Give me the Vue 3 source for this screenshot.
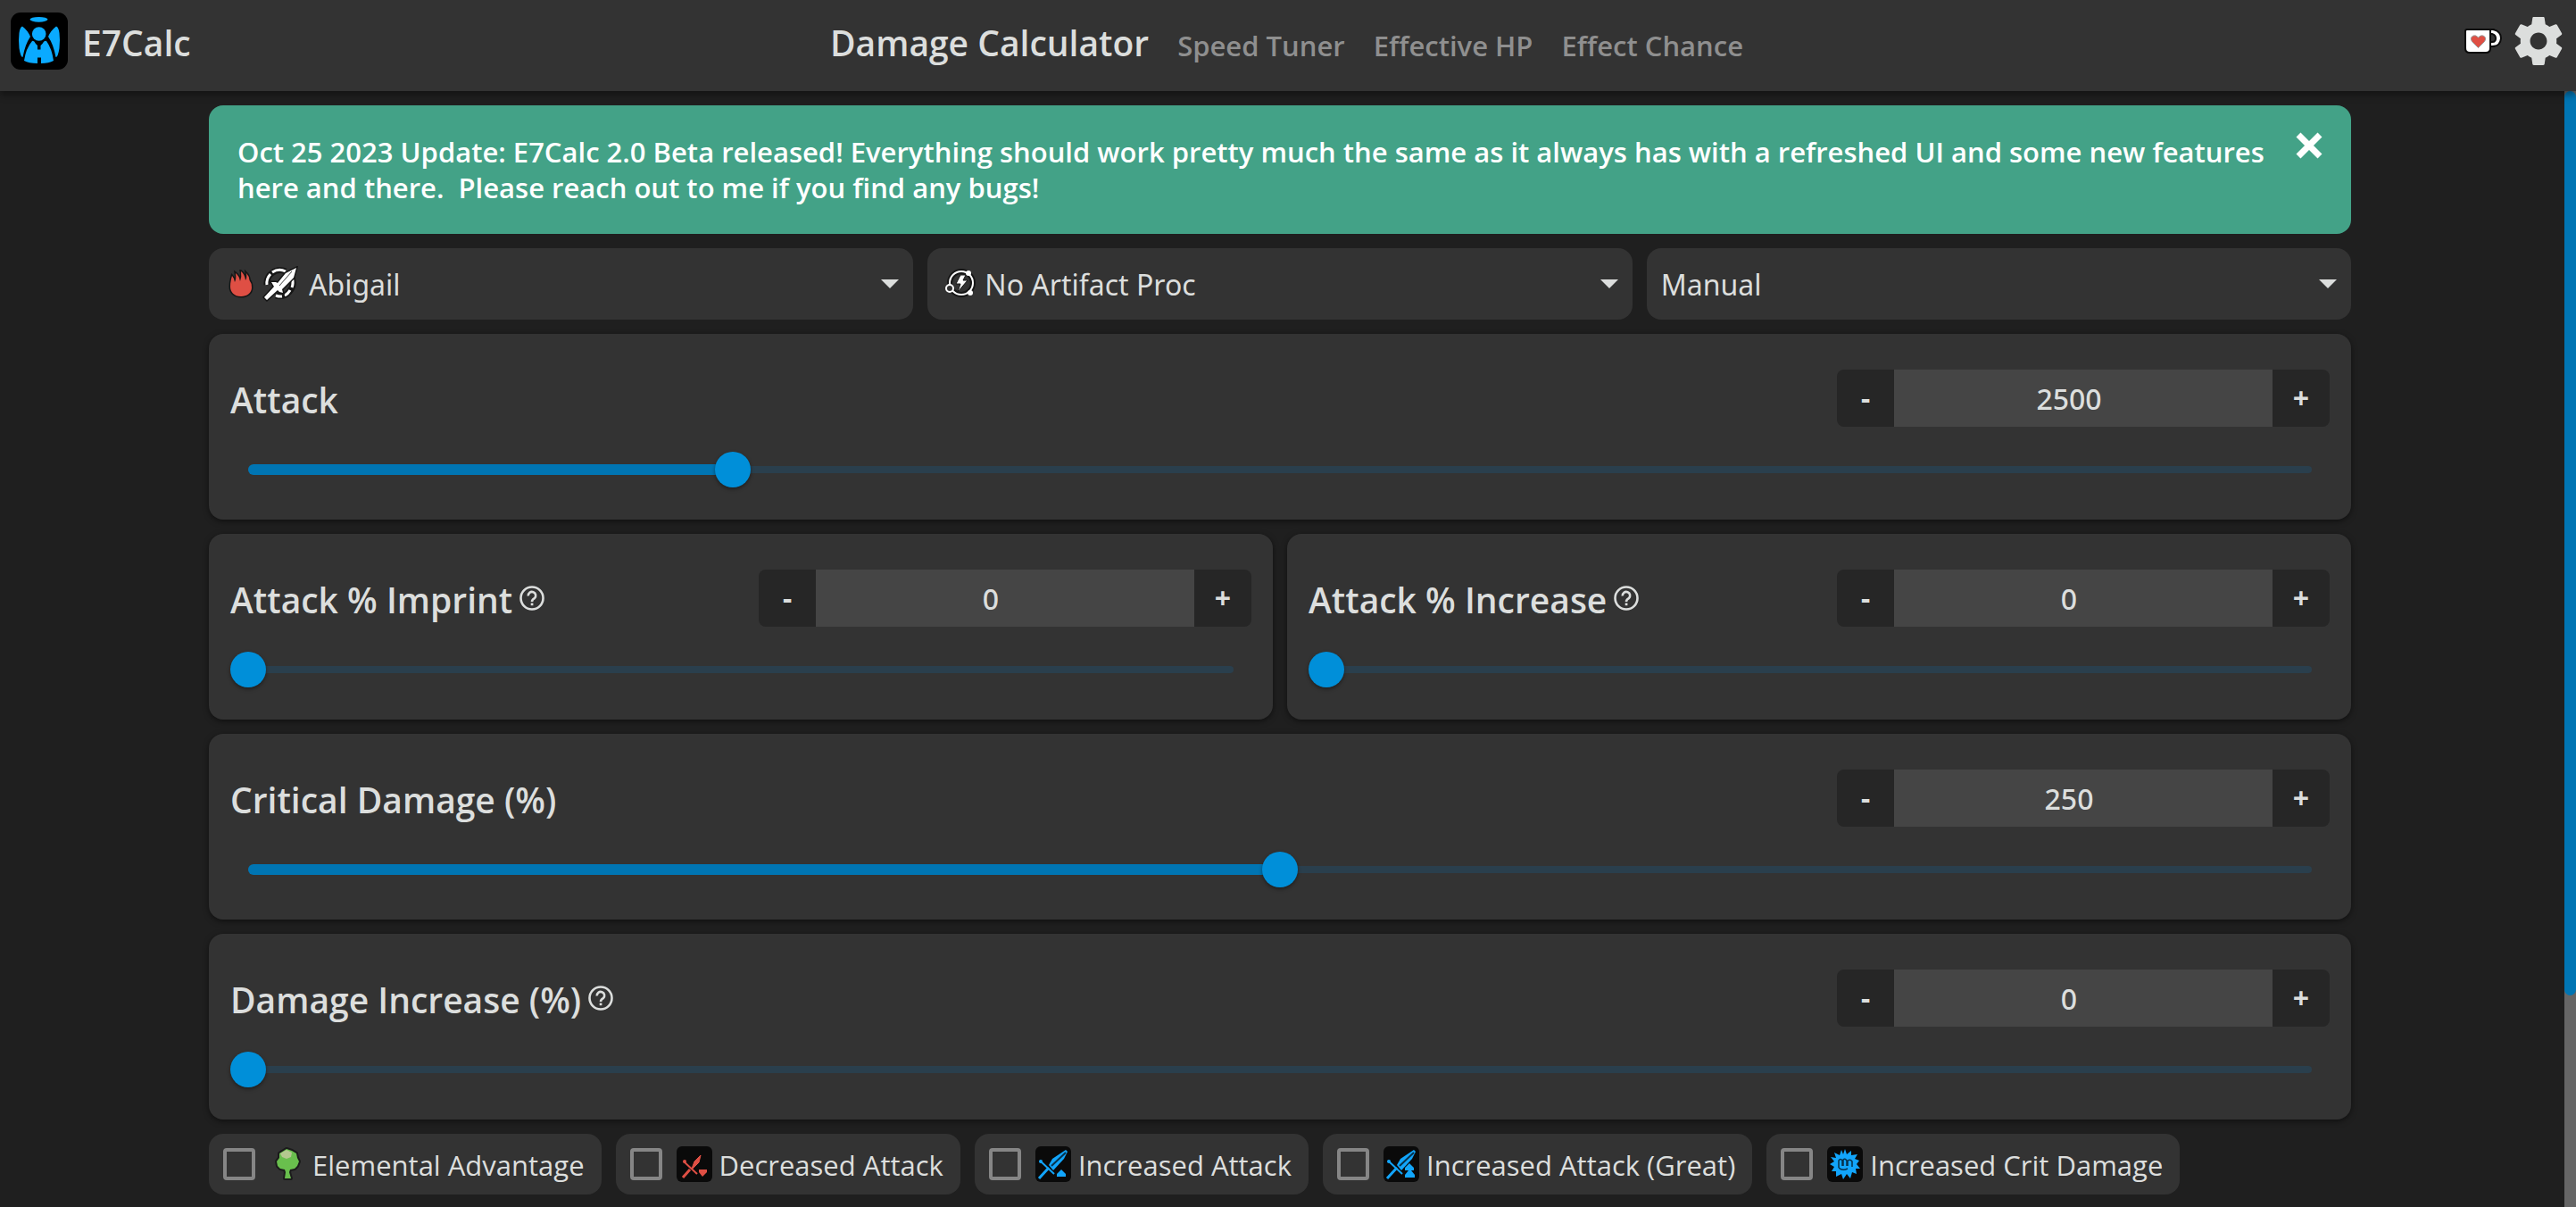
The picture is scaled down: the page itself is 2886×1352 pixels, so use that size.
<script setup>
import { reactive, ref } from 'vue'

const bannerOpen = ref(true)

const pages = ['Damage Calculator', 'Speed Tuner', 'Effective HP', 'Effect Chance']

const stats = reactive([
  { id: 'attack', label: 'Attack', value: 2500, min: 200, max: 10000, wide: true },
  { id: 'imprint', label: 'Attack % Imprint', value: 0, min: 0, max: 50, help: true },
  { id: 'attack-increase', label: 'Attack % Increase', value: 0, min: 0, max: 100, help: true },
  { id: 'crit', label: 'Critical Damage (%)', value: 250, min: 150, max: 350, wide: true },
  { id: 'damage-increase', label: 'Damage Increase (%)', value: 0, min: 0, max: 100, wide: true, help: true },
])

const toggles = reactive([
  { id: 'element', label: 'Elemental Advantage', icon: 'tree', on: false },
  { id: 'atk-down', label: 'Decreased Attack', icon: 'down', on: false },
  { id: 'atk-up', label: 'Increased Attack', icon: 'up', on: false },
  { id: 'atk-up-great', label: 'Increased Attack (Great)', icon: 'great', on: false },
  { id: 'crit-up', label: 'Increased Crit Damage', icon: 'crit', on: false },
])

const percent = (s) => ((s.value - s.min) / (s.max - s.min)) * 100
const step = (s, by) => {
  s.value = Math.min(s.max, Math.max(s.min, Number(s.value) + by))
}
</script>

<template>
  <div class="app">
    <header class="toolbar">
      <a class="brand" href="#">
        <svg class="logo" viewBox="0 0 64 64" aria-hidden="true">
          <rect width="64" height="64" rx="11" fill="#000" />
          <g fill="#0aaaff">
            <ellipse cx="31.500" cy="7.800" rx="10" ry="2.900" />
            <circle cx="31.700" cy="24" r="7.800" />
            <path d="M13 15.500 Q19 20 22 27 Q16 36 13.500 50 Q11 50 9.500 40 Q8.500 31 9.500 23 Q10.500 16 13 15.500Z" />
            <path d="M51 15.500 Q45 20 42 27 Q48 36 50.500 50 Q53 50 54.500 40 Q55.500 31 54.500 23 Q53.500 16 51 15.500Z" />
            <path d="M24 32 Q26 31 28 35 L30 37 L30 41.500 L33.500 41.500 L33.500 37 L35.500 35 Q37.500 31 40 32 Q46 40 48 54 Q43 57 34 57 L34 50.500 L30 50.500 L30 57 Q20 57 15 54 Q17 40 24 32Z" />
          </g>
        </svg>
        <span>E7Calc</span>
      </a>
      <nav class="pages">
        <a v-for="(p, i) in pages" :key="p" href="#" :class="{ current: i === 0 }">{{ p }}</a>
      </nav>
      <div class="tools">
        <a href="#" aria-label="Support on Ko-fi">
          <svg class="cup" viewBox="0 0 42 28" aria-hidden="true">
            <path d="M28 1 H32 Q41 3 41 11 Q40 20 31 20 H28" fill="#fff" stroke="#0b0b0b" stroke-width="2" />
            <path d="M29 6 H31 Q35 7 35 11 Q35 15 31 15 H29Z" fill="#333" stroke="#0b0b0b" stroke-width="2" />
            <path d="M3 1 H29 V22 Q29 27 24 27 H6 Q1 27 1 22 V3 Q1 1 3 1Z" fill="#fff" stroke="#0b0b0b" stroke-width="2" />
            <path d="M15.500 21.500 L8.500 14.500 Q5.500 10 10 8 Q13 7 15.500 10 Q18 7 21 8 Q25.500 10 22.500 14.500Z" fill="#df4f44" stroke="#999" stroke-width="1" />
          </svg>
        </a>
        <button type="button" class="plain" aria-label="Settings">
          <svg class="gear" viewBox="2 2 20 20" aria-hidden="true">
            <path fill="#dcdedd" fill-rule="evenodd" d="M19.430 12.980c.04-.32.07-.64.07-.98s-.03-.66-.07-.98l2.110-1.650c.19-.15.24-.42.12-.64l-2-3.460c-.12-.22-.39-.3-.61-.22l-2.490 1c-.52-.4-1.080-.73-1.690-.98l-.38-2.650C14.460 2.180 14.250 2 14 2h-4c-.25 0-.46.18-.49.42l-.38 2.650c-.61.25-1.170.59-1.690.98l-2.490-1c-.23-.09-.49 0-.61.22l-2 3.460c-.13.22-.07.49.12.64l2.110 1.650c-.04.32-.07.65-.07.98s.03.66.07.98l-2.110 1.650c-.19.15-.24.42-.12.64l2 3.460c.12.22.39.3.61.22l2.490-1c.52.4 1.080.73 1.690.98l.38 2.650c.03.24.24.42.49.42h4c.25 0 .46-.18.49-.42l.38-2.650c.61-.25 1.170-.59 1.690-.98l2.490 1c.23.09.49 0 .61-.22l2-3.460c.12-.22.07-.49-.12-.64l-2.110-1.650zM12 15.500c-1.930 0-3.500-1.570-3.500-3.500s1.570-3.500 3.500-3.500 3.500 1.570 3.500 3.500-1.570 3.500-3.500 3.500z" />
          </svg>
        </button>
      </div>
    </header>

    <div class="body">
      <main class="content">
        <section v-if="bannerOpen" class="banner">
          <p>Oct 25 2023 Update: E7Calc 2.0 Beta released! Everything should work pretty much the same as it always has with a refreshed UI and some new features here and there.&nbsp; Please reach out to me if you find any bugs!</p>
          <button type="button" class="plain" aria-label="Dismiss" @click="bannerOpen = false">
            <svg class="cross" viewBox="0 0 30 30" aria-hidden="true">
              <path d="M3 3 L27 27 M27 3 L3 27" stroke="#fff" stroke-width="7" />
            </svg>
          </button>
        </section>

        <div class="pickers">
          <label class="picker">
            <svg class="flame" viewBox="0 0 28 32" aria-hidden="true">
              <path d="M14 30 C6 30 2 25 2 19 C2 14 3 11 4 7 Q6 9 7 14 Q9 10 8 4 Q12 7 13 13 Q15 8 14 2 Q18 5 19 12 Q21 9 20 4 Q23 7 23.500 12 Q26 15 26 20 C26 26 21 30 14 30Z" fill="#df4f44" stroke="#161616" stroke-width="3" paint-order="stroke" />
            </svg>
            <svg class="sword" viewBox="0 0 40 40" aria-hidden="true">
              <g fill="none" stroke="#161616" stroke-width="7">
                <path d="M5 21 A15 15 0 0 1 26 6" />
                <path d="M33 13 A15 15 0 0 1 15 33" />
              </g>
              <g fill="none" stroke="#fff" stroke-width="3">
                <path d="M5 21 A15 15 0 0 1 9 9 M11 7 A15 15 0 0 1 26 6" />
                <path d="M33 13 A15 15 0 0 1 33 24 M31 27 A15 15 0 0 1 25 33 M22 34 A15 15 0 0 1 15 33" />
              </g>
              <path d="M38 2 L35 13 L22 26 L23 30 L19 29 L17 27 L5 38 L2 35 L13 23 L10 18 L15 18 L17 19 L26 8Z" fill="#fff" stroke="#161616" stroke-width="3" paint-order="stroke" />
              <path d="M33 6 L19 22" stroke="#444" stroke-width="1" />
            </svg>
            <select aria-label="Hero"><option>Abigail</option></select>
            <svg class="arrow" viewBox="0 0 20 10" aria-hidden="true"><path d="M0 0 H20 L10 10Z" fill="#dcdedd" /></svg>
          </label>
          <label class="picker">
            <svg class="artifact" viewBox="0 0 34 34" aria-hidden="true">
              <circle cx="18" cy="16" r="13" fill="none" stroke="#161616" stroke-width="6" />
              <circle cx="18" cy="16" r="13" fill="none" stroke="#fff" stroke-width="2" />
              <circle cx="5" cy="22" r="4" fill="#333" stroke="#fff" stroke-width="2" />
              <circle cx="26" cy="5" r="3" fill="#fff" />
              <circle cx="28" cy="27" r="3" fill="#fff" />
              <path d="M17 7 L23 7 L20 13 L25 13 L14 26 L17 17 L12 17Z" fill="#fff" stroke="#161616" stroke-width="1" />
            </svg>
            <select aria-label="Artifact"><option>No Artifact Proc</option></select>
            <svg class="arrow" viewBox="0 0 20 10" aria-hidden="true"><path d="M0 0 H20 L10 10Z" fill="#dcdedd" /></svg>
          </label>
          <label class="picker">
            <select aria-label="Stat source"><option>Manual</option></select>
            <svg class="arrow" viewBox="0 0 20 10" aria-hidden="true"><path d="M0 0 H20 L10 10Z" fill="#dcdedd" /></svg>
          </label>
        </div>

        <div class="stats">
          <section v-for="s in stats" :key="s.id" class="stat" :class="{ wide: s.wide }">
            <div class="stat-head">
              <label :for="s.id">{{ s.label }}</label>
              <svg v-if="s.help" class="help" viewBox="0 0 28 28" aria-hidden="true">
                <circle cx="14" cy="14" r="12.500" fill="none" stroke="#dcdedd" stroke-width="2.600" />
                <path d="M9.800 11.500 A4.200 4.200 0 1 1 16.800 14.200 Q14 15.800 14 18" fill="none" stroke="#dcdedd" stroke-width="2.600" />
                <rect x="12.700" y="19.500" width="2.700" height="2.700" fill="#dcdedd" />
              </svg>
              <div class="stepper">
                <button type="button" :aria-label="'Decrease ' + s.label" @click="step(s, -1)">-</button>
                <input :id="s.id" v-model.number="s.value" type="text" inputmode="numeric" />
                <button type="button" :aria-label="'Increase ' + s.label" @click="step(s, 1)">+</button>
              </div>
            </div>
            <div class="slider">
              <div class="rail"></div>
              <div class="fill-area"><div class="fill" :style="{ width: percent(s) + '%' }"></div></div>
              <input v-model.number="s.value" type="range" :min="s.min" :max="s.max" :aria-label="s.label + ' slider'" />
            </div>
          </section>
        </div>

        <div class="toggles">
          <label v-for="t in toggles" :key="t.id" class="toggle">
            <input v-model="t.on" type="checkbox" />
            <svg class="effect" viewBox="0 0 40 40" aria-hidden="true">
              <g v-if="t.icon === 'tree'">
                <path d="M19 3 L25 5 L30 8 L31 13 L33 17 L31 22 L28 25 L23 26 L22 29 L24 36 L17 36 L18 29 L17 26 L12 25 L9 22 L8 17 L11 13 L11 8Z" fill="#69bf4d" stroke="#1b1b1b" stroke-width="4" stroke-linejoin="round" paint-order="stroke" />
                <path d="M19 4 L25 7 L24 12 L19 14 L14 12 L12 8Z" fill="#b4c98f" />
              </g>
              <template v-else>
                <rect width="40" height="40" rx="6" fill="#0a0a0a" />
                <g v-if="t.icon === 'down'" fill="none" stroke="#df4f44">
                  <path d="M7 35 L15 26" stroke-width="3" />
                  <path d="M8 17 L23 31" stroke-width="2" />
                  <path d="M17 25 L20 17 L27 10 L25 18 L18 25" fill="#df4f44" stroke-width="1" />
                  <circle cx="9" cy="17" r="2" fill="#df4f44" stroke="none" />
                  <path d="M25 26 H34 V29 L29 34 L25 29Z" fill="#df4f44" stroke="none" />
                </g>
                <g v-else-if="t.icon === 'up' || t.icon === 'great'" fill="none" stroke="#12a5fb">
                  <path d="M4 36 L15 24" stroke-width="3" />
                  <path d="M5 16 L21 31" stroke-width="2" />
                  <circle cx="6" cy="17" r="2" fill="#12a5fb" stroke="none" />
                  <path d="M15 21 L19 14 L34 4 L36 6 L32 14 L20 27Z" fill="#12a5fb" stroke="none" />
                  <path d="M18 22 L34 7" stroke="#07324b" stroke-width="2" />
                  <path v-if="t.icon === 'up'" d="M29 26 L34 31 V34 H24 V31Z" fill="#12a5fb" stroke="none" />
                  <path v-else d="M29 19 L34 24 V27 H31 L35 32 V35 H24 V32 L28 27 H24 V24Z" fill="#12a5fb" stroke="none" />
                </g>
                <g v-else>
                  <path d="M20 3 L22 9 L27 5 L27 10 L34 9 L31 14 L36 16 L33 20 L37 25 L32 25 L33 31 L28 29 L26 36 L22 31 L18 37 L16 31 L10 34 L10 28 L5 28 L8 23 L3 20 L8 17 L4 12 L10 13 L8 7 L14 10 L16 4 L18 9Z" fill="#12a5fb" />
                  <path d="M13 24 V16 Q15 13 17 16 V22 M18 22 V15 Q20 13 22 16 V22 M23 22 V16 Q26 14 28 17 V23 M13 24 Q17 28 23 25" fill="none" stroke="#06304a" stroke-width="1.500" />
                </g>
              </template>
            </svg>
            <span>{{ t.label }}</span>
          </label>
        </div>
      </main>
      <div class="scrollbar" aria-hidden="true"><div class="scroll-thumb"></div></div>
    </div>
  </div>
</template>

<style>
body {
  background: #1f1f1f;
}
</style>

<style scoped>
.app {
  display: flex;
  flex-direction: column;
  height: 100vh;
  overflow: hidden;
  background: #1f1f1f;
  color: #dcdedd;
  font-family: "Open Sans", "Noto Sans", sans-serif;
  font-size: 31px;
  line-height: 40px;
}
.app *,
.app {
  box-sizing: border-box;
}
svg {
  display: block;
  flex: none;
}
a {
  color: inherit;
  text-decoration: none;
}
button,
input,
select {
  color: inherit;
  font: inherit;
}
.plain {
  padding: 0;
  border: 0;
  background: none;
  cursor: pointer;
}

.toolbar {
  display: grid;
  grid-template-columns: 1fr auto 1fr;
  flex: none;
  height: 102px;
  padding: 14px 15px 0 12px;
  align-items: start;
  background: #333;
  box-shadow: 0 4px 8px rgba(0, 0, 0, 0.4);
  position: relative;
}
.brand {
  display: flex;
  gap: 16px;
  font-size: 39px;
  font-weight: 600;
  line-height: 68px;
}
.logo {
  width: 64px;
  height: 64px;
}
.pages {
  display: flex;
  gap: 32px;
  align-items: baseline;
  line-height: 68px;
  color: #8f8f8f;
  font-weight: 600;
}
.pages .current {
  color: #dcdedd;
  font-size: 39px;
}
.tools {
  display: flex;
  justify-content: flex-end;
  align-items: center;
  gap: 14px;
  height: 64px;
}
.cup {
  width: 42px;
  height: 28px;
}
.gear {
  width: 54px;
  height: 54px;
}

.body {
  display: flex;
  flex: 1;
  min-height: 0;
}
.content {
  display: flex;
  flex: 1;
  flex-direction: column;
  gap: 16px;
  max-width: 2400px;
  margin: 0 auto;
  padding-top: 16px;
}
.scrollbar {
  flex: none;
  width: 13px;
  margin-left: 5px;
  background: #666;
}
.scroll-thumb {
  height: 81%;
  border-radius: 8px;
  background: #0075b3;
}

.banner {
  display: flex;
  align-items: flex-start;
  gap: 16px;
  padding: 30px 32px;
  border-radius: 16px;
  background: #43a287;
  color: #fff;
  font-weight: 600;
}
.banner p {
  flex: 1;
  margin: 0;
  padding: 2px 0;
}
.cross {
  width: 30px;
  height: 30px;
}

.pickers {
  display: grid;
  grid-template-columns: repeat(3, 1fr);
  gap: 16px;
}
.picker {
  display: flex;
  align-items: center;
  height: 80px;
  padding: 0 16px;
  border-radius: 16px;
  background: #333;
}
.picker select {
  flex: 1;
  min-width: 0;
  height: 64px;
  padding: 2px 0 0;
  border: 0;
  outline: 0;
  appearance: none;
  background: #333;
  font-family: "Noto Sans", sans-serif;
  font-size: 32px;
}
.flame {
  width: 28px;
  height: 32px;
  margin: 0 10px 0 6px;
}
.sword {
  width: 40px;
  height: 40px;
  margin-right: 12px;
}
.artifact {
  width: 34px;
  height: 34px;
  margin: 0 10px 0 4px;
}
.arrow {
  width: 20px;
  height: 10px;
}

.stats {
  display: grid;
  grid-template-columns: 1fr 1fr;
  gap: 16px;
}
.stat {
  padding: 40px 24px 36px;
  border-radius: 16px;
  background: #333;
  box-shadow: 0 2px 6px rgba(0, 0, 0, 0.5);
}
.wide {
  grid-column: 1 / -1;
}
.stat-head {
  display: flex;
  align-items: center;
  gap: 8px;
  height: 64px;
}
.stat-head label {
  padding-top: 4px;
  font-size: 39px;
  font-weight: 600;
  line-height: 60px;
}
.help {
  width: 28px;
  height: 28px;
}
.stepper {
  display: flex;
  width: 552px;
  height: 64px;
  margin-left: auto;
  overflow: hidden;
  border-radius: 8px;
  font-family: "Noto Sans", sans-serif;
  font-size: 32px;
  font-weight: 500;
}
.stepper button {
  width: 64px;
  padding: 0;
  border: 0;
  background: #262626;
  font-weight: 700;
}
.stepper input {
  flex: 1;
  min-width: 0;
  padding: 2px 32px 0 0;
  border: 0;
  outline: 0;
  background: #454545;
  text-align: center;
}

.slider {
  display: grid;
  align-items: center;
  height: 40px;
  margin-top: 28px;
}
.slider > * {
  grid-area: 1 / 1;
}
.rail {
  height: 8px;
  margin: 0 20px;
  border-radius: 4px;
  background: #2a3f4d;
}
.fill-area {
  margin: 0 20px;
}
.fill {
  height: 12px;
  border-radius: 6px;
  background: #0075b3;
}
.slider input {
  width: 100%;
  height: 40px;
  margin: 0;
  appearance: none;
  background: transparent;
}
.slider input::-webkit-slider-thumb {
  width: 40px;
  height: 40px;
  appearance: none;
  border-radius: 50%;
  background: #008fd9;
  box-shadow: 0 2px 4px rgba(0, 0, 0, 0.4);
}

.toggles {
  display: flex;
  flex-wrap: wrap;
  gap: 16px;
}
.toggle {
  display: flex;
  align-items: center;
  height: 68px;
  padding: 0 19px 0 16px;
  border-radius: 16px;
  background: #333;
}
.toggle span {
  padding-top: 2px;
}
.toggle input {
  width: 36px;
  height: 36px;
  margin: 0 16px 0 0;
  appearance: none;
  border: 4px solid #868686;
  border-radius: 4px;
}
.toggle input:checked {
  border-color: #008fd9;
  background: #008fd9;
}
.effect {
  width: 40px;
  height: 40px;
  margin-right: 8px;
}
</style>
